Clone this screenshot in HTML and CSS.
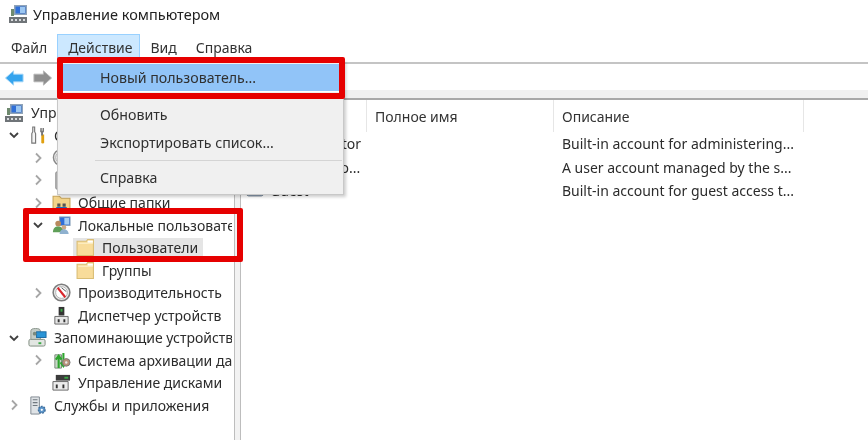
FILE: index.html
```html
<!DOCTYPE html>
<html lang="ru">
<head>
<meta charset="utf-8">
<title>Управление компьютером</title>
<link rel="stylesheet" href="styles.css">
</head>
<body>
<svg class="defs" width="0" height="0" aria-hidden="true">
  <defs>
    <symbol id="pc" viewBox="0 0 20 20">
      <rect x="6" y="1" width="13" height="10" fill="#8fa3b8"/>
      <rect x="7.500" y="2.500" width="10" height="7" fill="#2f6fd8"/>
      <path d="M12 3h5v6h-5z" fill="#9cc7f2"/>
      <path d="M3 5h3v7H3z" fill="#6f8a6f"/>
      <rect x="1" y="13" width="18" height="6" fill="#6f7478"/>
      <path d="M3 15h2v2H3zM7 15h2v2H7zM11 15h2v2h-2zM15 15h2v2h-2z" fill="#d8dbde"/>
    </symbol>
    <symbol id="tools" viewBox="0 0 18 20">
      <path d="M4 1v5l-1 2v10h4V8L6 6V1z" fill="#f4f4f4" stroke="#777" stroke-width="1.200"/>
      <path d="M13 9h3v8a1.500 1.500 0 0 1-3 0z" fill="#e0a010"/>
      <path d="M12 2h1.500v3h.8V2h1.500v4l-1 1v3h-2V7l-1-1z" fill="#777"/>
    </symbol>
    <symbol id="clock" viewBox="0 0 20 20">
      <circle cx="10" cy="10" r="8.500" fill="#e8e8e8" stroke="#888" stroke-width="1.500"/>
      <circle cx="10" cy="10" r="6" fill="#fff" stroke="#aaa"/>
    </symbol>
    <symbol id="perf" viewBox="0 0 20 20">
      <circle cx="10" cy="10" r="8.800" fill="#e8e8e8" stroke="#7d7d7d" stroke-width="1.600"/>
      <circle cx="10" cy="10" r="6.200" fill="#fff" stroke="#b0b0b0"/>
      <path d="M6 5l8 10" stroke="#d8262c" stroke-width="2.200"/>
      <path d="M10 5l5 4" stroke="#555" stroke-width="1"/>
    </symbol>
    <symbol id="logs" viewBox="0 0 18 20">
      <rect x="3" y="1" width="12" height="18" rx="1" fill="#bbb" stroke="#888"/>
      <path d="M5 4h8M5 8h8M5 12h8M5 16h8" stroke="#666"/>
    </symbol>
    <symbol id="share" viewBox="0 0 18 18">
      <path d="M1 3h6l2 2h8v12H1z" fill="#f3d48a" stroke="#c6a458"/>
      <path d="M5 10h3v3H5zM10 10h3v3h-3z" fill="#555"/>
      <path d="M4 14h5M9 14h5" stroke="#1d6fc4" stroke-width="1.500"/>
    </symbol>
    <symbol id="users" viewBox="0 0 20 20">
      <rect x="8" y="1" width="11" height="9" fill="#2f6fd8" stroke="#8aa0b6"/>
      <path d="M13 2h5v7h-5z" fill="#a6cdf3"/>
      <circle cx="6.500" cy="8" r="3" fill="#b98a5e"/>
      <path d="M1 17c0-4 2-6 5.500-6S12 13 12 17z" fill="#5f9f58"/>
      <circle cx="12.500" cy="12" r="2.500" fill="#c9a98a"/>
      <path d="M8 19c0-3 2-5 4.500-5s5 2 5 5z" fill="#8fb1cf"/>
    </symbol>
    <symbol id="folder" viewBox="0 0 18 18">
      <path d="M1 3h9l1-1.500h5.500V16.500H1z" fill="#f8dc9a" stroke="#d9bd74"/>
      <path d="M11 2.500h5v2h-5z" fill="#fff"/>
      <path d="M2 5h14" stroke="#fdf0c8"/>
    </symbol>
    <symbol id="device" viewBox="0 0 18 20">
      <rect x="6" y="1" width="6" height="9" fill="#333"/>
      <rect x="8" y="3" width="2" height="3" fill="#3aa845"/>
      <path d="M2 11h14v8H2z" fill="#e6e6e6" stroke="#666"/>
      <path d="M5 14h2v3H5zM11 14h2v3h-2z" fill="#333"/>
    </symbol>
    <symbol id="storage" viewBox="0 0 20 20">
      <rect x="1" y="12" width="17" height="7" rx="1.500" fill="#e2e6e2" stroke="#7d8a7d"/>
      <path d="M3 3a5 2.500 0 0 1 10 0v9H3z" fill="#c3ccc6" stroke="#8a958c"/>
      <rect x="9" y="4" width="10" height="6" fill="#2a94d6" stroke="#1c6ca4"/>
      <rect x="11" y="15" width="3" height="2" fill="#3aa845"/>
      <circle cx="7" cy="6" r="2" fill="#7a8a7e"/>
    </symbol>
    <symbol id="backup" viewBox="0 0 20 20">
      <path d="M3 4h7v14H3z" fill="#c8d8c8" stroke="#7a8a7a"/>
      <path d="M7 18V6M4 9l3-4 3 4" fill="none" stroke="#2ea52e" stroke-width="2.200"/>
      <path d="M12 2v14M9 12l3 4 3-4" fill="none" stroke="#2ea52e" stroke-width="2.200"/>
      <circle cx="15" cy="12" r="4" fill="#b8917a" stroke="#777"/>
      <circle cx="15" cy="12" r="1.300" fill="#e8e8e8"/>
    </symbol>
    <symbol id="disk" viewBox="0 0 20 20">
      <path d="M4 2h15v6H4z" fill="#3b3b3b"/>
      <path d="M13 4h4v2h-4z" fill="#3aa845"/>
      <path d="M1 9h16v9H1z" fill="#ececec" stroke="#666"/>
      <path d="M4 12h2v4H4zM11 12h2v4h-2z" fill="#333"/>
    </symbol>
    <symbol id="services" viewBox="0 0 20 20">
      <path d="M3 1h9v18H3z" fill="#dfe3e6" stroke="#808890"/>
      <path d="M5 4h5M5 7h5M5 10h5" stroke="#70787f" stroke-width="1.200"/>
      <circle cx="14.500" cy="14.500" r="3.500" fill="#5c94c8" stroke="#3e6f9e" stroke-width="1.500" stroke-dasharray="2 1"/>
      <circle cx="14.500" cy="14.500" r="1.200" fill="#fff"/>
    </symbol>
    <symbol id="user" viewBox="0 0 20 14">
      <rect x="1" y="2" width="18" height="11" rx="2" fill="#b9c9da" stroke="#5d6f82"/>
      <circle cx="10" cy="6" r="3" fill="#f2f2f2" stroke="#5d6f82"/>
      <path d="M5 12c1-3 9-3 10 0z" fill="#e5e5e5"/>
    </symbol>
    <symbol id="open" viewBox="0 0 12 12">
      <path d="M2 4l4 4 4-4" fill="none" stroke="#404040" stroke-width="1.800"/>
    </symbol>
    <symbol id="closed" viewBox="0 0 12 12">
      <path d="M4 1.500l4.500 4.500L4 10.500" fill="none" stroke="#a6a6a6" stroke-width="1.800"/>
    </symbol>
  </defs>
</svg>

<div class="app">
  <header class="titlebar">
    <svg class="title-icon"><use href="#pc"/></svg>
    <span>Управление компьютером</span>
  </header>

  <nav class="menubar">
    <span class="menu-item file">Файл</span>
    <span class="menu-item active">Действие</span>
    <span class="menu-item view">Вид</span>
    <span class="menu-item">Справка</span>
  </nav>

  <div class="toolbar">
    <svg class="arrow" viewBox="0 0 20 16"><path d="M0.500 8L9 0.500V4h10v8H9v3.500z" fill="#35a4ee" stroke="#9fd3f5"/></svg>
    <svg class="arrow" viewBox="0 0 20 16"><path d="M19.500 8L11 0.500V4H1v8h10v3.500z" fill="#8f8f8f" stroke="#b5b5b5"/></svg>
  </div>
  <div class="strip"></div>

  <main class="panes">
    <section class="tree">
      <div class="row root"><svg class="ico wide"><use href="#pc"/></svg><span class="lbl">Управление компьютером (локальным)</span></div>
      <div class="row l1"><svg class="chev"><use href="#open"/></svg><svg class="ico"><use href="#tools"/></svg><span class="lbl">Служебные программы</span></div>
      <div class="row l2"><svg class="chev"><use href="#closed"/></svg><svg class="ico"><use href="#clock"/></svg><span class="lbl">Планировщик заданий</span></div>
      <div class="row l2"><svg class="chev"><use href="#closed"/></svg><svg class="ico"><use href="#logs"/></svg><span class="lbl">Просмотр событий</span></div>
      <div class="row l2"><svg class="chev"><use href="#closed"/></svg><svg class="ico"><use href="#share"/></svg><span class="lbl">Общие папки</span></div>
      <div class="row l2"><svg class="chev"><use href="#open"/></svg><svg class="ico"><use href="#users"/></svg><span class="lbl">Локальные пользователи и группы</span></div>
      <div class="row l3"><span class="chev"></span><span class="selected"><svg class="ico"><use href="#folder"/></svg><span class="lbl">Пользователи</span></span></div>
      <div class="row l3"><span class="chev"></span><svg class="ico"><use href="#folder"/></svg><span class="lbl">Группы</span></div>
      <div class="row l2"><svg class="chev"><use href="#closed"/></svg><svg class="ico"><use href="#perf"/></svg><span class="lbl">Производительность</span></div>
      <div class="row l2"><span class="chev"></span><svg class="ico"><use href="#device"/></svg><span class="lbl">Диспетчер устройств</span></div>
      <div class="row l1"><svg class="chev"><use href="#open"/></svg><svg class="ico"><use href="#storage"/></svg><span class="lbl">Запоминающие устройства</span></div>
      <div class="row l2"><svg class="chev"><use href="#closed"/></svg><svg class="ico"><use href="#backup"/></svg><span class="lbl">Система архивации данных</span></div>
      <div class="row l2"><span class="chev"></span><svg class="ico"><use href="#disk"/></svg><span class="lbl">Управление дисками</span></div>
      <div class="row l1"><svg class="chev"><use href="#closed"/></svg><svg class="ico"><use href="#services"/></svg><span class="lbl">Службы и приложения</span></div>
    </section>

    <div class="splitter"></div>

    <section class="list">
      <div class="list-head">
        <span class="col c-name">Имя</span>
        <span class="col c-full">Полное имя</span>
        <span class="col c-desc">Описание</span>
      </div>
      <div class="list-row">
        <span class="cell c-name"><svg class="user-ico"><use href="#user"/></svg>Administrator</span>
        <span class="cell c-full"></span>
        <span class="cell c-desc">Built-in account for administering...</span>
      </div>
      <div class="list-row">
        <span class="cell c-name"><svg class="user-ico"><use href="#user"/></svg>DefaultAcco...</span>
        <span class="cell c-full"></span>
        <span class="cell c-desc">A user account managed by the s...</span>
      </div>
      <div class="list-row">
        <span class="cell c-name"><svg class="user-ico"><use href="#user"/></svg>Guest</span>
        <span class="cell c-full"></span>
        <span class="cell c-desc">Built-in account for guest access t...</span>
      </div>
    </section>
  </main>

  <div class="dropdown">
    <div class="dd-item hot">Новый пользователь...</div>
    <div class="dd-item refresh">Обновить</div>
    <div class="dd-item export">Экспортировать список...</div>
    <div class="dd-sep"></div>
    <div class="dd-item help">Справка</div>
  </div>

  <div class="callout callout-menu"></div>
  <div class="callout callout-tree"></div>
</div>
</body>
</html>
```

FILE: styles.css
```css
* { box-sizing: border-box; }

html, body {
  margin: 0;
  padding: 0;
  background: #fff;
}

body {
  width: 868px;
  height: 440px;
  overflow: hidden;
  font-family: "Noto Sans", "Open Sans", sans-serif;
  font-size: 14px;
  color: #2c2c2c;
}

.defs { position: absolute; }

.app {
  position: relative;
  width: 868px;
  height: 440px;
  overflow: hidden;
  filter: blur(0.4px);
}

.titlebar {
  height: 32px;
  display: flex;
  align-items: center;
  padding: 0 0 4px 8px;
  gap: 5px;
  font-size: 14.5px;
  color: #222;
}

.title-icon { width: 20px; height: 20px; }

.menubar {
  height: 32px;
  display: flex;
  align-items: stretch;
  padding: 2px 0;
  border-bottom: 2px solid #c4c4c4;
}

.menu-item {
  display: flex;
  align-items: center;
  padding: 0 7px 0 10px;
  color: #333;
  border: 1px solid transparent;
}

.menu-item.file { margin-right: 2px; padding-left: 9px; margin-left: 1px; }

.menu-item.active {
  margin-right: -1px;
  background: #cce8ff;
  border-color: #99d1ff;
}

.toolbar {
  height: 26px;
  display: flex;
  align-items: center;
  gap: 9px;
  padding: 2px 0 0 5px;
}

.arrow { width: 19px; height: 16px; }

.strip {
  height: 10px;
  background: #f0f0f0;
  border-bottom: 2px solid #a8a8a8;
}

.panes {
  height: 340px;
  display: flex;
}

.tree {
  width: 232px;
  margin-right: 2px;
  padding-top: 1.5px;
  overflow: hidden;
}

.row {
  height: 22.5px;
  display: flex;
  align-items: center;
  white-space: nowrap;
}

.root { padding-left: 4px; }
.l1 { padding-left: 2px; }
.l2 { padding-left: 26px; }
.l3 { padding-left: 50px; }

.chev {
  width: 26px;
  height: 12px;
  flex: none;
  display: block;
  padding-right: 2px;
}

.ico {
  width: 19px;
  height: 19px;
  flex: none;
}

.ico.wide { width: 20px; height: 20px; }

.lbl { margin-left: 7px; }

.selected {
  display: flex;
  align-items: center;
  height: 20px;
  margin-left: -3px;
  padding: 0 5px 0 3px;
  background: #e5e5e5;
}

.splitter {
  width: 7px;
  background: #f2f2f2;
  border-left: 1px solid #bdbdbd;
  border-right: 1px solid #bdbdbd;
}

.list { flex: 1; }

.list-head {
  height: 32px;
  display: flex;
  align-items: stretch;
  margin-left: -1px;
}

.col {
  display: flex;
  align-items: center;
  padding-left: 8px;
  border-right: 1px solid #e6e6e6;
  color: #333;
}

.c-name { width: 127px; flex: none; }
.c-full { width: 187px; flex: none; }
.c-desc { width: 250px; flex: none; }

.list-row {
  height: 23.5px;
  display: flex;
  align-items: center;
  white-space: nowrap;
  margin-left: -1px;
}

.cell {
  display: flex;
  align-items: center;
  padding-left: 6px;
}

.c-desc.cell { padding-left: 8px; }

.user-ico {
  width: 18px;
  height: 13px;
  margin-right: 6px;
  flex: none;
}

.dropdown {
  position: absolute;
  left: 57px;
  top: 60px;
  width: 287px;
  height: 135px;
  background: #f0f0f0;
  border: 1px solid #c8c8c8;
  box-shadow: 2px 2px 3px rgba(0, 0, 0, 0.2);
  font-size: 14.2px;
}

.dd-item {
  position: absolute;
  left: 0;
  right: 0;
  padding-left: 42px;
  color: #303030;
  line-height: 20px;
}

.hot {
  top: 3px;
  left: 5px;
  right: 4px;
  height: 28px;
  line-height: 28px;
  padding-left: 37px;
  background: #91c4f8;
  border-bottom: 1px solid #fff;
}

.refresh { top: 44px; }
.export { top: 72px; }
.help { top: 107px; }

.dd-sep {
  position: absolute;
  left: 37px;
  right: 1px;
  top: 99px;
  height: 1px;
  background: #d4d4d4;
}

.callout {
  position: absolute;
  border: 6px solid #e60000;
  border-radius: 2px;
}

.callout-menu {
  left: 57px;
  top: 57px;
  width: 288px;
  height: 42px;
}

.callout-tree {
  left: 23px;
  top: 208px;
  width: 220px;
  height: 54px;
}
```
